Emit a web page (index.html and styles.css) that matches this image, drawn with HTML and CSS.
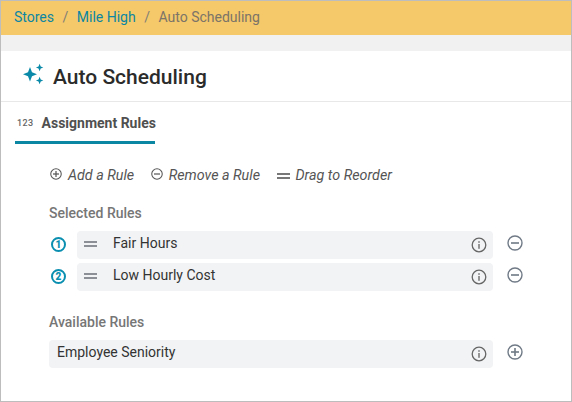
FILE: index.html
```html
<!DOCTYPE html>
<html lang="en">
<head>
    <meta charset="UTF-8">
    <title>Auto Scheduling</title>
    <link rel="stylesheet" href="styles.css">
</head>
<body>
    <svg class="sprites" width="0" height="0">
        <symbol id="icon-info" viewBox="0 0 16 16">
            <circle cx="8" cy="8" r="6.8" fill="none" stroke="#666" stroke-width="1.3"/>
            <rect x="7.2" y="7" width="1.6" height="4.8" fill="#7d7d7d"/>
            <rect x="7.2" y="4.2" width="1.6" height="1.6" fill="#7d7d7d"/>
        </symbol>
        <symbol id="icon-minus" viewBox="0 0 16 16">
            <circle cx="8" cy="8" r="7" fill="none" stroke="currentColor" stroke-width="1.4"/>
            <rect x="4" y="7.2" width="8" height="1.6" fill="currentColor"/>
        </symbol>
        <symbol id="icon-plus" viewBox="0 0 16 16">
            <circle cx="8" cy="8" r="7" fill="none" stroke="currentColor" stroke-width="1.4"/>
            <rect x="4" y="7.2" width="8" height="1.6" fill="currentColor"/>
            <rect x="7.2" y="4" width="1.6" height="8" fill="currentColor"/>
        </symbol>
    </svg>

    <div class="pagina">
        <div class="breadcrumb">
            <a href="#">Stores</a>
            <span class="sep">/</span>
            <a href="#">Mile High</a>
            <span class="sep">/</span>
            <span class="atual">Auto Scheduling</span>
        </div>
        <div class="faixa"></div>

        <div class="cabecalho">
            <svg class="brilho" width="22" height="22" viewBox="0 0 22 22">
                <path fill="#0a8aa8" d="M8 4 L10 9.3 L15 11.3 L10 13.3 L8 18.6 L6 13.3 L1 11.3 L6 9.3 Z"/>
                <path fill="#0a8aa8" d="M17.6 0.8 L18.7 3.4 L21.3 4.5 L18.7 5.6 L17.6 8.2 L16.5 5.6 L13.9 4.5 L16.5 3.4 Z"/>
                <path fill="#0a8aa8" d="M17.6 13.8 L18.7 16.4 L21.3 17.5 L18.7 18.6 L17.6 21.2 L16.5 18.6 L13.9 17.5 L16.5 16.4 Z"/>
            </svg>
            <h1>Auto Scheduling</h1>
        </div>

        <div class="abas">
            <div class="aba">
                <span class="aba-num">123</span>
                <span>Assignment Rules</span>
            </div>
        </div>

        <div class="conteudo">
            <div class="legenda">
                <span class="legenda-item">
                    <svg class="icone-legenda" width="12" height="12"><use href="#icon-plus"/></svg>
                    Add a Rule
                </span>
                <span class="legenda-item">
                    <svg class="icone-legenda" width="12" height="12"><use href="#icon-minus"/></svg>
                    Remove a Rule
                </span>
                <span class="legenda-item">
                    <span class="arrastar arrastar-legenda"></span>
                    Drag to Reorder
                </span>
            </div>

            <h2>Selected Rules</h2>
            <div class="linha">
                <span class="numero">1</span>
                <div class="regra">
                    <span class="arrastar"></span>
                    <span class="regra-nome">Fair Hours</span>
                    <svg class="info" width="16" height="16"><use href="#icon-info"/></svg>
                </div>
                <svg class="acao" width="16" height="16"><use href="#icon-minus"/></svg>
            </div>
            <div class="linha">
                <span class="numero">2</span>
                <div class="regra">
                    <span class="arrastar"></span>
                    <span class="regra-nome">Low Hourly Cost</span>
                    <svg class="info" width="16" height="16"><use href="#icon-info"/></svg>
                </div>
                <svg class="acao" width="16" height="16"><use href="#icon-minus"/></svg>
            </div>

            <h2 class="titulo-disponiveis">Available Rules</h2>
            <div class="linha">
                <div class="regra regra-disponivel">
                    <span class="regra-nome">Employee Seniority</span>
                    <svg class="info" width="16" height="16"><use href="#icon-info"/></svg>
                </div>
                <svg class="acao" width="16" height="16"><use href="#icon-plus"/></svg>
            </div>
        </div>
    </div>
</body>
</html>
```

FILE: styles.css
```css
* {
    box-sizing: border-box;
}

html, body {
    margin: 0;
    height: 100%;
}

body {
    font-family: Roboto, "Liberation Sans", sans-serif;
    background-color: #fff;
    overflow: hidden;
}

.sprites {
    display: block;
    height: 0;
}

.pagina {
    height: 402px;
    border: 1px solid #bdbdbd;
    background-color: #fff;
}

.breadcrumb {
    height: 34px;
    background-color: #f5c869;
    padding: 0 13px 2px;
    display: flex;
    align-items: center;
    gap: 8.5px;
    font-size: 14px;
}

.breadcrumb a {
    color: #0b86a3;
    text-decoration: none;
}

.sep {
    color: #7f7f78;
}

.atual {
    color: #7b7468;
}

.faixa {
    height: 16px;
    background-color: #f1f1f1;
}

.cabecalho {
    height: 51px;
    border-bottom: 1px solid #e8e8e8;
    display: flex;
    align-items: center;
    padding: 0 0 0 21px;
    gap: 9px;
}

.brilho {
    margin-top: -4px;
}

.cabecalho h1 {
    margin: 2px 0 0;
    font-size: 21px;
    font-weight: 500;
    color: #2b2b2b;
}

.abas {
    padding-left: 14px;
}

.aba {
    width: 140px;
    height: 42px;
    border-bottom: 3px solid #0b86a3;
    display: flex;
    align-items: center;
    gap: 8px;
    padding: 3px 0 0 2px;
    font-size: 14px;
    font-weight: 700;
    color: #505050;
    white-space: nowrap;
}

.aba-num {
    font-size: 9px;
    font-weight: 500;
    letter-spacing: 0.4px;
    color: #666;
}

.conteudo {
    padding: 23px 0 0 48px;
}

.legenda {
    display: flex;
    gap: 16.5px;
    height: 16px;
    align-items: center;
    padding-left: 1px;
    font-size: 14.3px;
    font-style: italic;
    color: #555;
}

.legenda-item {
    display: flex;
    align-items: center;
    gap: 6px;
}

.icone-legenda {
    color: #555;
    margin-top: -2px;
}

h2 {
    margin: 22px 0 0;
    font-size: 14px;
    line-height: 17px;
    font-weight: 500;
    color: #767676;
}

.titulo-disponiveis {
    margin-top: 23px;
}

.linha {
    display: flex;
    align-items: center;
    margin-top: 4px;
    height: 28px;
}

h2 + .linha {
    margin-top: 9px;
}

.numero {
    width: 15px;
    height: 15px;
    margin: -1px 11px 0 2px;
    border: 2px solid #0b8fb0;
    border-radius: 50%;
    color: #0b8fb0;
    font-size: 10px;
    font-weight: 900;
    line-height: 11px;
    text-align: center;
}

.regra {
    width: 416px;
    height: 28px;
    background-color: #f2f3f5;
    border-radius: 4px;
    display: flex;
    align-items: center;
    padding: 0 6px 0 7px;
    font-size: 14px;
    color: #333;
}

.regra-disponivel {
    width: 444px;
    padding-left: 8px;
}

.arrastar {
    display: block;
    width: 13px;
    height: 6px;
    margin-top: -2px;
    border-top: 2px solid #8c8f96;
    border-bottom: 2px solid #8c8f96;
    margin-right: 16px;
}

.arrastar-legenda {
    margin: 2px 0 0;
    width: 13px;
    border-color: #777;
}

.regra-nome {
    flex: 1;
    margin-top: -5px;
}

.acao {
    margin: -4px 0 0 14px;
    color: #6f7a86;
}
```
